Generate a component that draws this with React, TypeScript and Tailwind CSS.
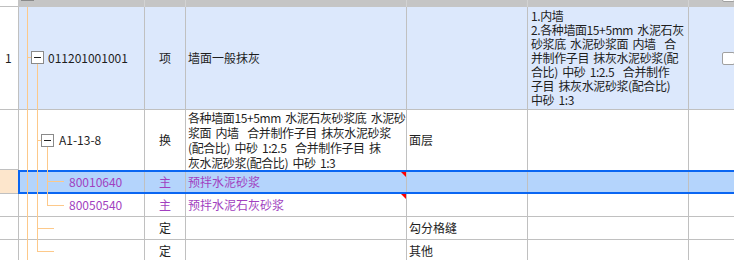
import React from "react";

const LINE = "border-[#c0c0c0]";
const PURPLE = "text-[#a13fc0]";

function Tri() {
  return (
    <svg className="absolute right-0 top-0" width="5" height="5" viewBox="0 0 5 5">
      <polygon points="0,0 5,0 5,5" fill="#ff0000" />
    </svg>
  );
}

function Cell({
  w,
  className = "",
  children,
  last = false,
}: {
  w?: string;
  className?: string;
  children?: React.ReactNode;
  last?: boolean;
}) {
  return (
    <div
      className={`relative h-full shrink-0 overflow-hidden ${last ? "flex-1" : `${w} border-r ${LINE}`} ${className}`}
    >
      {children}
    </div>
  );
}

function TreeOverlay() {
  const c = "#fdc98a";
  return (
    <svg
      className="pointer-events-none absolute left-0 top-0"
      width="734"
      height="260"
      viewBox="0 0 734 260"
      shapeRendering="crispEdges"
    >
      <line x1="21" y1="0.5" x2="34" y2="0.5" stroke="#8a8a8a" />
      <line x1="27.5" y1="7" x2="27.5" y2="262" stroke={c} />
      <line x1="27" y1="57.5" x2="31" y2="57.5" stroke={c} />
      <line x1="37.5" y1="64" x2="37.5" y2="252" stroke={c} />
      <rect x="31.5" y="51.5" width="12" height="12" fill="#fff" stroke="#8a8a8a" />
      <line x1="34" y1="57.5" x2="41" y2="57.5" stroke="#222" />

      <line x1="37" y1="140.5" x2="41" y2="140.5" stroke={c} />
      <line x1="47.5" y1="147" x2="47.5" y2="206" stroke={c} />
      <rect x="41.5" y="134.5" width="12" height="12" fill="#fff" stroke="#8a8a8a" />
      <line x1="44" y1="140.5" x2="51" y2="140.5" stroke="#222" />

      <line x1="47" y1="181.5" x2="64" y2="181.5" stroke={c} />
      <line x1="47" y1="205.5" x2="64" y2="205.5" stroke={c} />
      <line x1="37" y1="228.5" x2="54" y2="228.5" stroke={c} />
      <line x1="37" y1="251.5" x2="54" y2="251.5" stroke={c} />
    </svg>
  );
}

const MULTI = "whitespace-pre tracking-[-0.4px] [word-spacing:2px]";

export default function App() {
  return (
    <div className="relative h-[260px] w-[734px] overflow-hidden bg-white font-['Noto_Sans_CJK_SC','Noto_Sans',sans-serif] text-[12px] text-[#1e1e1e]">
      {/* header strip */}
      <div className="flex h-[7px]">
        <div className={`h-full w-[18px] shrink-0 border-b ${LINE} bg-white`} />
        <div className="relative flex h-full flex-1 bg-[#c5c5c5]">
          <div className="h-full w-[127px] shrink-0 border-r border-[#d2d2d2]" />
          <div className="h-full w-[41px] shrink-0 border-r border-[#d2d2d2]" />
          <div className="h-full w-[221px] shrink-0 border-r border-[#d2d2d2]" />
          <div className="h-full w-[121px] shrink-0 border-r border-[#d2d2d2]" />
          <div className="h-full w-[161px] shrink-0 border-r border-[#d2d2d2]" />
          <div className="relative h-full flex-1">
            <div className="absolute left-[33px] top-[-11px] h-[13px] w-[13px] rounded-[2px] border border-[#a0a0a0] bg-white" />
          </div>
        </div>
      </div>

      {/* row 1 */}
      <div className={`flex h-[103px] border-b ${LINE}`}>
        <Cell w="w-[19px]" className="flex items-center pl-[5px] bg-white">
          1
        </Cell>
        <div className="flex h-full flex-1 bg-[#dce8fc]">
          <Cell w="w-[126px]" className="flex items-center pl-[29px]">
            011201001001
          </Cell>
          <Cell w="w-[41px]" className="flex items-center justify-center">
            项
          </Cell>
          <Cell w="w-[221px]" className="flex items-center pl-[2px]">
            墙面一般抹灰
          </Cell>
          <Cell w="w-[121px]" />
          <Cell w="w-[161px]" className="flex items-center pl-[3px]">
            <div className={`${MULTI} leading-[14px]`}>
              {"1.内墙\n2.各种墙面15+5mm 水泥石灰\n砂浆底 水泥砂浆面 内墙  合\n并制作子目 抹灰水泥砂浆(配\n合比) 中砂 1:2.5  合并制作\n子目 抹灰水泥砂浆(配合比)\n中砂 1:3"}
            </div>
          </Cell>
          <Cell last className="flex items-center pl-[33px]">
            <div className="h-[13px] w-[13px] shrink-0 rounded-[2px] border border-[#a0a0a0] bg-white" />
          </Cell>
        </div>
      </div>

      {/* row 2 */}
      <div className="flex h-[60px]">
        <div className={`h-full w-[19px] shrink-0 border-b border-r ${LINE}`} />
        <div className="flex h-full flex-1">
          <Cell w="w-[126px]" className="flex items-center pl-[40px]">
            A1-13-8
          </Cell>
          <Cell w="w-[41px]" className="flex items-center justify-center">
            换
          </Cell>
          <Cell w="w-[221px]" className="flex items-center pl-[2px]">
            <div className={`${MULTI} leading-[15px]`}>
              {"各种墙面15+5mm 水泥石灰砂浆底 水泥砂\n浆面 内墙  合并制作子目 抹灰水泥砂浆\n(配合比) 中砂 1:2.5  合并制作子目 抹\n灰水泥砂浆(配合比) 中砂 1:3"}
            </div>
          </Cell>
          <Cell w="w-[121px]" className="flex items-center pl-[2px]">
            面层
          </Cell>
          <Cell w="w-[161px]" />
          <Cell last />
        </div>
      </div>

      {/* row 3 (selected) */}
      <div className="flex h-[24px]">
        <div className={`h-full w-[18px] shrink-0 border-b ${LINE} bg-[#fde6cc]`} />
        <div className="flex h-full flex-1 border-y-2 border-l-2 border-[#0a66f2] bg-[#b4d4fc]">
          <Cell w="w-[125px]" className={`flex items-center pl-[49px] ${PURPLE}`}>
            80010640
          </Cell>
          <Cell w="w-[41px]" className={`flex items-center justify-center ${PURPLE}`}>
            主
          </Cell>
          <Cell w="w-[221px]" className={`flex items-center pl-[2px] ${PURPLE}`}>
            预拌水泥砂浆
            <Tri />
          </Cell>
          <Cell w="w-[121px]" />
          <Cell w="w-[161px]" />
          <Cell last />
        </div>
      </div>

      {/* row 4 */}
      <div className={`flex h-[23px] border-b ${LINE}`}>
        <div className={`h-full w-[19px] shrink-0 border-r ${LINE}`} />
        <div className="flex h-full flex-1">
          <Cell w="w-[126px]" className={`flex items-center pl-[50px] ${PURPLE}`}>
            80050540
          </Cell>
          <Cell w="w-[41px]" className={`flex items-center justify-center ${PURPLE}`}>
            主
          </Cell>
          <Cell w="w-[221px]" className={`flex items-center pl-[2px] ${PURPLE}`}>
            预拌水泥石灰砂浆
            <Tri />
          </Cell>
          <Cell w="w-[121px]" />
          <Cell w="w-[161px]" />
          <Cell last />
        </div>
      </div>

      {/* row 5 */}
      <div className={`flex h-[23px] border-b ${LINE}`}>
        <div className={`h-full w-[19px] shrink-0 border-r ${LINE}`} />
        <div className="flex h-full flex-1">
          <Cell w="w-[126px]" />
          <Cell w="w-[41px]" className="flex items-center justify-center">
            定
          </Cell>
          <Cell w="w-[221px]" />
          <Cell w="w-[121px]" className="flex items-center pl-[2px]">
            勾分格缝
          </Cell>
          <Cell w="w-[161px]" />
          <Cell last />
        </div>
      </div>

      {/* row 6 */}
      <div className={`flex h-[23px] border-b ${LINE}`}>
        <div className={`h-full w-[19px] shrink-0 border-r ${LINE}`} />
        <div className="flex h-full flex-1">
          <Cell w="w-[126px]" />
          <Cell w="w-[41px]" className="flex items-center justify-center">
            定
          </Cell>
          <Cell w="w-[221px]" />
          <Cell w="w-[121px]" className="flex items-center pl-[2px]">
            其他
          </Cell>
          <Cell w="w-[161px]" />
          <Cell last />
        </div>
      </div>

      <TreeOverlay />
    </div>
  );
}
